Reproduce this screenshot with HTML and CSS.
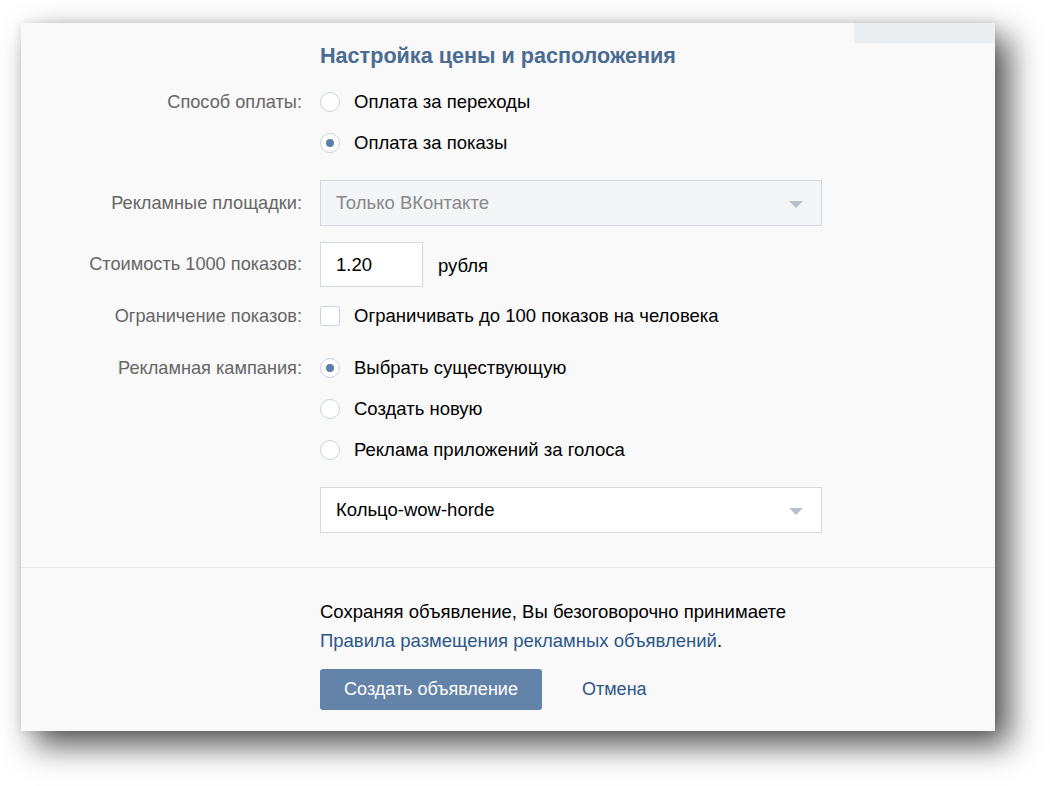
FILE: index.html
```html
<!DOCTYPE html>
<html lang="ru">
<head>
<meta charset="utf-8">
<link rel="stylesheet" href="styles.css">
</head>
<body>
<div class="stage">
  <div class="panel">
    <div class="topbar"><div class="tab"></div></div>
    <div class="form">
      <h2 class="title">Настройка цены и расположения</h2>

      <div class="row row-pay">
        <div class="label">Способ оплаты:</div>
        <div class="controls options">
          <div class="option"><span class="radio"></span><span>Оплата за переходы</span></div>
          <div class="option"><span class="radio on"></span><span>Оплата за показы</span></div>
        </div>
      </div>

      <div class="row row-sites">
        <div class="label">Рекламные площадки:</div>
        <div class="controls">
          <div class="select disabled"><span>Только ВКонтакте</span><span class="arrow"></span></div>
        </div>
      </div>

      <div class="row row-cost">
        <div class="label">Стоимость 1000 показов:</div>
        <div class="controls inline">
          <div class="input">1.20</div>
          <span class="unit">рубля</span>
        </div>
      </div>

      <div class="row row-limit">
        <div class="label">Ограничение показов:</div>
        <div class="controls">
          <div class="option"><span class="checkbox"></span><span>Ограничивать до 100 показов на человека</span></div>
        </div>
      </div>

      <div class="row row-camp">
        <div class="label">Рекламная кампания:</div>
        <div class="controls options">
          <div class="option"><span class="radio on"></span><span>Выбрать существующую</span></div>
          <div class="option"><span class="radio"></span><span>Создать новую</span></div>
          <div class="option"><span class="radio"></span><span>Реклама приложений за голоса</span></div>
          <div class="select camp"><span>Кольцо-wow-horde</span><span class="arrow"></span></div>
        </div>
      </div>
    </div>

    <div class="footer">
      <p class="terms">Сохраняя объявление, Вы безоговорочно принимаете<br><a class="link" href="#">Правила размещения рекламных объявлений</a>.</p>
      <div class="actions">
        <button class="btn">Создать объявление</button>
        <a class="cancel" href="#">Отмена</a>
      </div>
    </div>
  </div>
</div>
</body>
</html>
```
FILE: styles.css
```css
html, body {
  margin: 0;
  padding: 0;
  background: #ffffff;
}
body {
  font-family: "Liberation Sans", Arial, sans-serif;
  font-size: 18.5px;
  color: #000;
}
.stage {
  padding: 23px 0 55px 21px;
}
.panel {
  width: 974px;
  height: 708px;
  background: #f9f9f9;
  box-shadow: 14px 14px 30px rgba(0,0,0,0.68), 0 0 8px rgba(0,0,0,0.10);
  display: flex;
  flex-direction: column;
}
.topbar {
  display: flex;
  justify-content: flex-end;
  height: 20px;
}
.tab {
  width: 141px;
  height: 20px;
  background: #ebeef1;
}
.form {
  padding-left: 299px;
  padding-bottom: 34px;
  border-bottom: 1px solid #e5e7ea;
}
.title {
  margin: 0;
  font-size: 21.6px;
  line-height: 26px;
  font-weight: bold;
  color: #4a6b92;
}
.row {
  display: flex;
  position: relative;
}
.label {
  position: absolute;
  right: 100%;
  margin-right: 18px;
  white-space: nowrap;
  color: #666666;
  font-size: 18.2px;
  line-height: 20px;
}
.row-pay { margin-top: 23px; }
.row-sites { margin-top: 27px; }
.row-sites .label { top: 13px; }
.row-cost { margin-top: 16px; }
.row-cost .label { top: 12px; }
.row-limit { margin-top: 19px; }
.row-camp { margin-top: 32px; }
.options {
  display: flex;
  flex-direction: column;
  gap: 21px;
}
.option {
  display: flex;
  align-items: center;
  height: 20px;
  line-height: 20px;
  gap: 14px;
}
.radio {
  width: 18px;
  height: 18px;
  border: 1px solid #c9d3dd;
  border-radius: 50%;
  background: #fff;
  position: relative;
  flex: none;
}
.radio.on::after {
  content: "";
  position: absolute;
  left: 5px;
  top: 5px;
  width: 8px;
  height: 8px;
  border-radius: 50%;
  background: #5b7fa6;
}
.checkbox {
  width: 18px;
  height: 18px;
  border: 1px solid #c9d3dd;
  border-radius: 2px;
  background: #fff;
  flex: none;
}
.select {
  border: 1px solid #d5d9de;
  background: #fff;
  display: flex;
  align-items: center;
  justify-content: space-between;
  padding: 0 18px 0 15px;
  box-sizing: border-box;
  width: 502px;
  height: 46px;
}
.select.disabled {
  background: #f4f5f7;
  color: #888888;
}
.select.camp {
  margin-top: 6px;
}
.arrow {
  width: 0;
  height: 0;
  border-left: 7px solid transparent;
  border-right: 7px solid transparent;
  border-top: 7px solid #b9c0ca;
  margin-top: 2px;
}
.inline {
  display: flex;
  align-items: center;
  gap: 15px;
}
.input {
  width: 103px;
  height: 45px;
  box-sizing: border-box;
  border: 1px solid #d3d9de;
  background: #fff;
  padding: 0 15px;
  display: flex;
  align-items: center;
}
.unit { margin-top: 2px; }
.footer {
  padding: 29px 0 0 299px;
}
.terms {
  margin: 0;
  line-height: 29px;
}
.link, .cancel {
  color: #2b5788;
  text-decoration: none;
}
.cancel { font-size: 18px; }
.actions {
  margin-top: 14px;
  display: flex;
  align-items: center;
  gap: 40px;
}
.btn {
  width: 222px;
  height: 41px;
  border: none;
  border-radius: 3px;
  background: #6383a8;
  color: #fff;
  font-family: inherit;
  font-size: 18px;
  padding: 0;
}
```
